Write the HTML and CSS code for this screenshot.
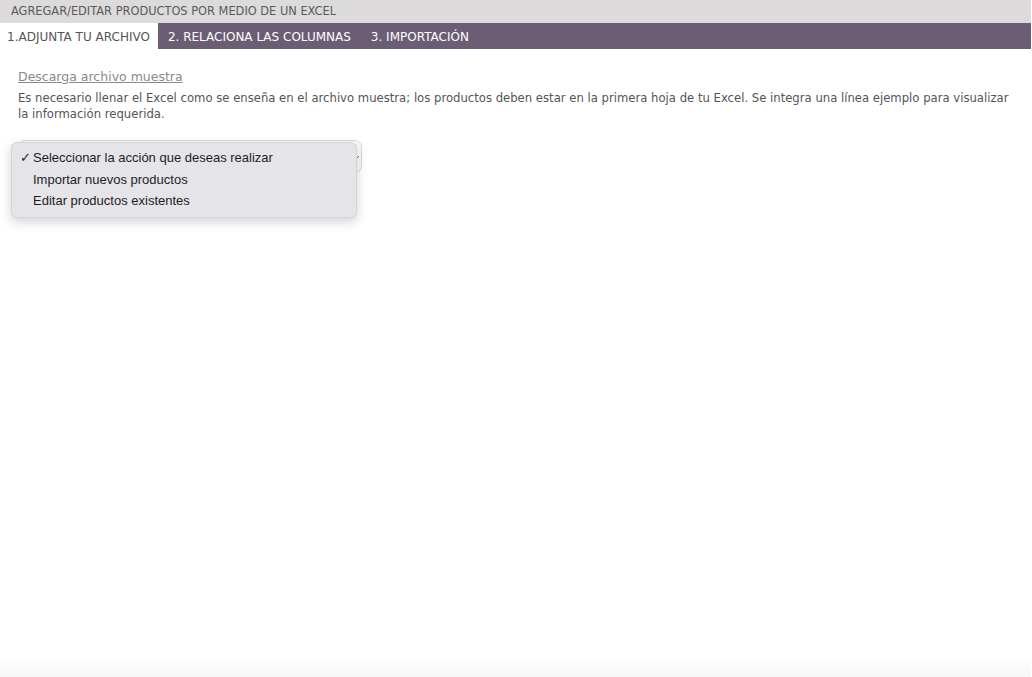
FILE: index.html
```html
<!DOCTYPE html>
<html lang="es">
<head>
    <meta charset="UTF-8">
    <meta name="viewport" content="width=device-width, initial-scale=1.0">
    <title>Agregar/Editar productos</title>
    <link rel="stylesheet" href="styles.css">
</head>
<body>

    <div class="page">
        <div class="title-bar">AGREGAR/EDITAR PRODUCTOS POR MEDIO DE UN EXCEL</div>

        <!-- pasos -->
        <div class="tabs">
            <span class="tab active">1.ADJUNTA TU ARCHIVO</span>
            <span class="tab">2. RELACIONA LAS COLUMNAS</span>
            <span class="tab">3. IMPORTACIÓN</span>
        </div>

        <div class="content">
            <a href="#" class="sample-link">Descarga archivo muestra</a>
            <p class="help-text">Es necesario llenar el Excel como se enseña en el archivo muestra; los productos deben estar en la primera hoja de tu Excel. Se integra una línea ejemplo para visualizar la información requerida.</p>

            <div class="select-wrap">
                <div class="select-box">
                    <svg class="chevron" width="6" height="6" viewBox="0 0 6 6"><path d="M1 2 L3 4 L5 2" fill="none" stroke="#777" stroke-width="1"/></svg>
                </div>

                <!-- menu abierto del select -->
                <ul class="select-menu">
                    <li class="checked"><span class="check">✓</span>Seleccionar la acción que deseas realizar</li>
                    <li>Importar nuevos productos</li>
                    <li>Editar productos existentes</li>
                </ul>
            </div>
        </div>
    </div>

</body>
</html>
```

FILE: styles.css
```css
body {
    margin: 0;
    font-family: 'DejaVu Sans', 'Open Sans', sans-serif;
    background-color: #fff;
}

.page {
    width: 1031px;
    height: 677px;
    display: flex;
    flex-direction: column;
    background: linear-gradient(to bottom, #fff 0, #fff 658px, #f6f6f6 677px);
}

.title-bar {
    height: 23px;
    line-height: 23px;
    padding-left: 11px;
    background-color: #dcdadb;
    color: #5a5a5a;
    font-size: 11.4px;
}

.tabs {
    display: flex;
    height: 26px;
    background-color: #6b5d74;
}

.tab {
    padding: 0 10px;
    line-height: 28px;
    font-size: 12px;
    color: #fff;
}

.tab.active {
    padding-left: 7px;
    padding-right: 8px;
    background-color: #fff;
    color: #555;
}

.content {
    padding: 20px 18px 0;
}

.sample-link {
    display: block;
    font-size: 12.5px;
    color: #8a8a8a;
    text-decoration: underline;
    line-height: 16px;
}

.help-text {
    margin: 5px 0 0;
    font-size: 11.65px;
    line-height: 16px;
    color: #555;
}

.select-wrap {
    position: relative;
    margin-top: 18px;
    width: 344px;
}

.select-box {
    height: 31px;
    border: 1px solid #d8d8d8;
    border-radius: 7px;
    background-color: #fbfbfb;
    display: flex;
    align-items: center;
    justify-content: flex-end;
    padding-right: 1px;
}

.select-menu {
    position: absolute;
    left: -7px;
    top: 2px;
    width: 344px;
    margin: 0;
    padding: 4px 0 5px;
    list-style: none;
    background-color: #e5e4e8;
    border: 1px solid #d4d3d7;
    border-radius: 6px;
    box-shadow: 0 4px 12px rgba(0, 0, 0, 0.18);
    font-family: 'Liberation Sans', Arial, sans-serif;
    font-size: 13px;
    color: #1e1e1e;
}

.select-menu li {
    height: 21.5px;
    line-height: 21.5px;
    padding-left: 21px;
    position: relative;
}

.check {
    position: absolute;
    left: 8px;
}
```
